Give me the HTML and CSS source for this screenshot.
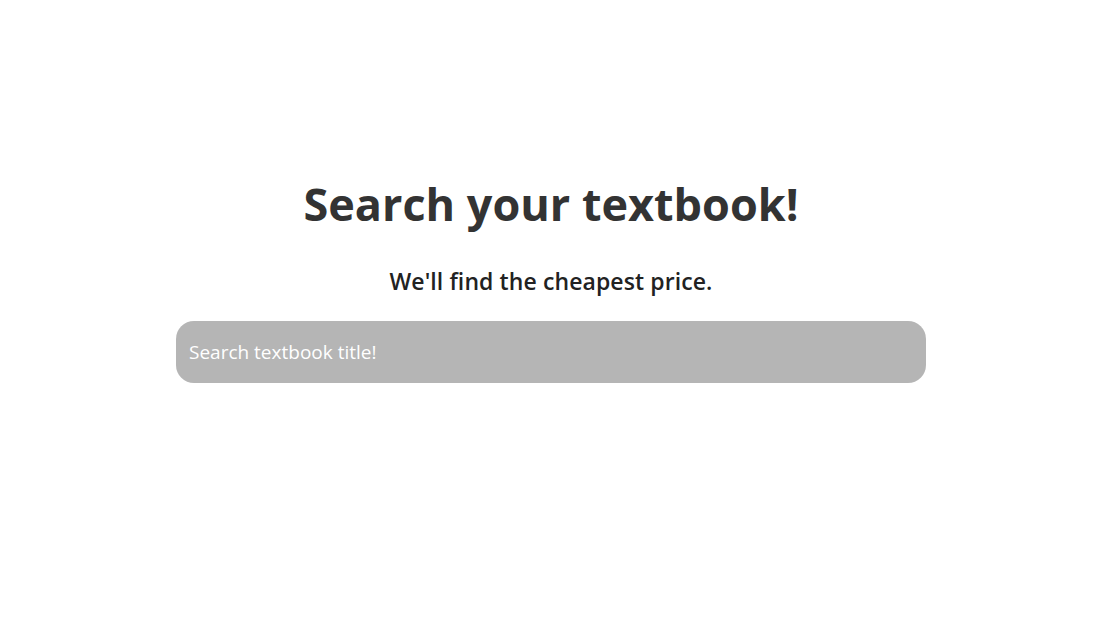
FILE: index.html
```html
<!DOCTYPE html>
<html lang="en">
<head>
<meta charset="utf-8">
<title>Search your textbook!</title>
<link rel="stylesheet" href="styles.css">
</head>
<body>
<main class="hero">
  <h1 class="title">Search your textbook!</h1>
  <p class="subtitle">We'll find the cheapest price.</p>
  <input class="search" type="text" placeholder="Search textbook title!">
</main>
</body>
</html>
```

FILE: styles.css
```css
html, body {
  margin: 0;
  padding: 0;
  background: #ffffff;
}
body {
  font-family: "Open Sans", "Liberation Sans", sans-serif;
}
.hero {
  display: flex;
  flex-direction: column;
  align-items: center;
  padding: 172px 0 0 4px;
}
.title {
  margin: 0;
  font-size: 45px;
  line-height: 64px;
  font-weight: 700;
  color: #333333;
  letter-spacing: 0;
}
.subtitle {
  margin: 31px 0 0;
  font-size: 23px;
  line-height: 28px;
  font-weight: 600;
  color: #222222;
  letter-spacing: 0.1px;
}
.search {
  box-sizing: border-box;
  margin-top: 26px;
  width: 750px;
  height: 62px;
  border: none;
  border-radius: 18px;
  background: #b5b5b5;
  padding: 0 13px;
  font-family: inherit;
  font-size: 19px;
  color: #ffffff;
  outline: none;
}
.search::placeholder {
  color: #ffffff;
  opacity: 1;
}
```
